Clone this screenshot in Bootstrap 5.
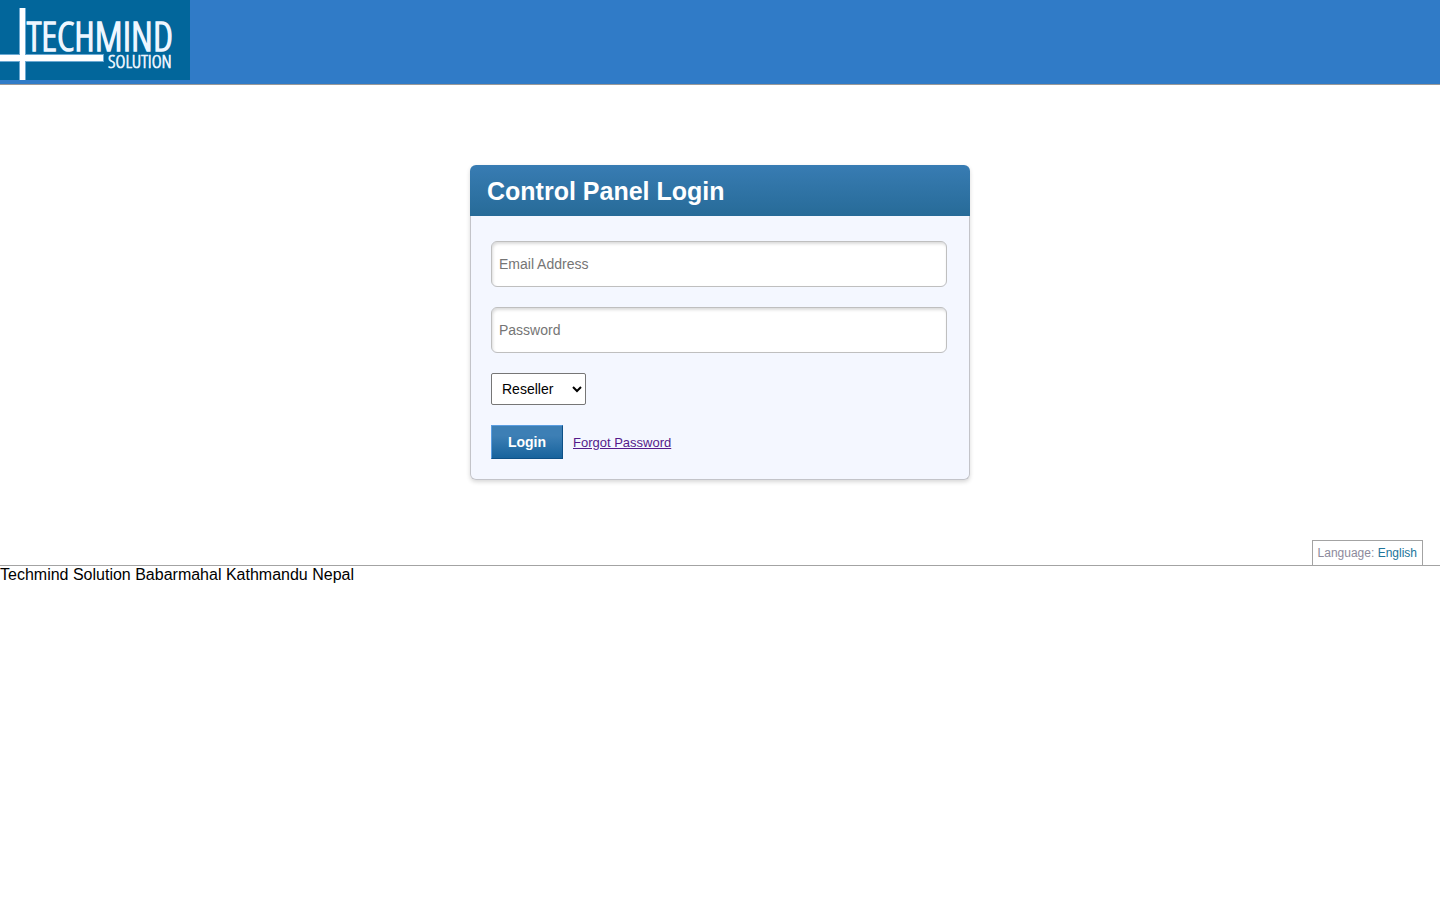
<!DOCTYPE html>
<html lang="en">
<head>
<meta charset="utf-8">
<meta name="viewport" content="width=device-width, initial-scale=1">
<title>Control Panel Login</title>
<link href="https://cdn.jsdelivr.net/npm/bootstrap@5.3.0/dist/css/bootstrap.min.css" rel="stylesheet">
<style>
body { font-family: "Liberation Sans", Arial, sans-serif; font-size: 16px; line-height: 18px; color: #000; background: #fff; }
.site-header { background: #307bc7; border-bottom: 1px solid #999; height: 85px; }
.site-logo { width: 190px; height: 80px; }
.site-logo text { font-family: "Open Sans Condensed Light", "Open Sans Condensed", "Liberation Sans", sans-serif; font-weight: 300; fill: #eef6ff; stroke: #eef6ff; }
.login-area { padding: 80px 0 60px; }
.login-card { width: 500px; max-width: 100%; border: 0; border-radius: 6px; background: none; box-shadow: 0 2px 4px rgba(0,0,0,.16); }
.login-title { margin: 0; padding: 0 17px; font-size: 25px; line-height: 52px; height: 51px; font-weight: 700; color: #fff; border-radius: 6px 6px 0 0; background: linear-gradient(#387cb3, #276b98); }
.login-body { padding: 25px 22px 20px 20px; gap: 20px; background: #f4f7ff; border: 1px solid #c3c4c9; border-top: 0; border-radius: 0 0 6px 6px; }
.login-input { height: 46px; padding: 0 7px; font-size: 14px; border: 1px solid #bfbfbf; border-radius: 6px; box-shadow: inset 1px 2px 3px rgba(0,0,0,.14); }
.login-input::placeholder { color: #757575; }
.role-select { width: 95px; height: 32px; padding: 0 6px; font-size: 14px; color: #000; background: #fff; border: 1px solid #767676; border-radius: 2px; }
.login-actions { gap: 10px; }
.login-btn { width: 72px; height: 34px; padding: 0; font-size: 14px; font-weight: 700; line-height: 16px; border-radius: 0; border: 1px solid; border-color: #5b9de0 #0d5087 #0d5087 #5b9de0; color: #fff; background: linear-gradient(#3d7fb5 30%, #17639d); }
.login-btn:hover { color: #fff; background: #17639d; }
.forgot { font-size: 13px; color: #551a8b; }
.lang-bar { padding-right: 17px; border-bottom: 1px solid #a3a3a3; }
.lang-box { height: 25px; padding: 0 5px; font-size: 12px; line-height: 24px; color: #8d8a9c; border: 1px solid #a3a3a3; border-bottom: 0; }
.lang-box a { color: #21759b; }
</style>
</head>
<body>
<header class="site-header">
  <a href="#" class="d-inline-block" aria-label="Techmind Solution">
    <svg class="site-logo d-block" viewBox="0 0 190 80">
      <rect width="190" height="80" fill="#02669b"/>
      <path d="M19 8h7v72h-7zM0 54h104v8H0z" fill="#6ba9d2"/>
      <path d="M20 8h5v72h-5zM0 55h103v6H0z" fill="#fff"/>
      <text x="27" y="51" font-size="41" stroke-width="1.6">TECHMIND</text>
      <text x="108" y="68" font-size="19" stroke-width=".7">SOLUTION</text>
    </svg>
  </a>
</header>
<main class="login-area d-flex justify-content-center">
  <section class="card login-card">
    <h1 class="login-title">Control Panel Login</h1>
    <form class="login-body d-flex flex-column">
      <input type="email" class="form-control login-input" placeholder="Email Address" aria-label="Email Address">
      <input type="password" class="form-control login-input" placeholder="Password" aria-label="Password">
      <select class="role-select" aria-label="Account type">
        <option>Reseller</option>
        <option>Customer</option>
      </select>
      <div class="login-actions d-flex align-items-baseline">
        <button type="submit" class="btn login-btn">Login</button>
        <a href="#" class="forgot">Forgot Password</a>
      </div>
    </form>
  </section>
</main>
<footer>
  <div class="lang-bar d-flex justify-content-end">
    <div class="lang-box">Language: <a href="#" class="text-decoration-none">English</a></div>
  </div>
  <div>Techmind Solution Babarmahal Kathmandu Nepal</div>
</footer>
<script src="https://cdn.jsdelivr.net/npm/bootstrap@5.3.0/dist/js/bootstrap.bundle.min.js"></script>
</body>
</html>
